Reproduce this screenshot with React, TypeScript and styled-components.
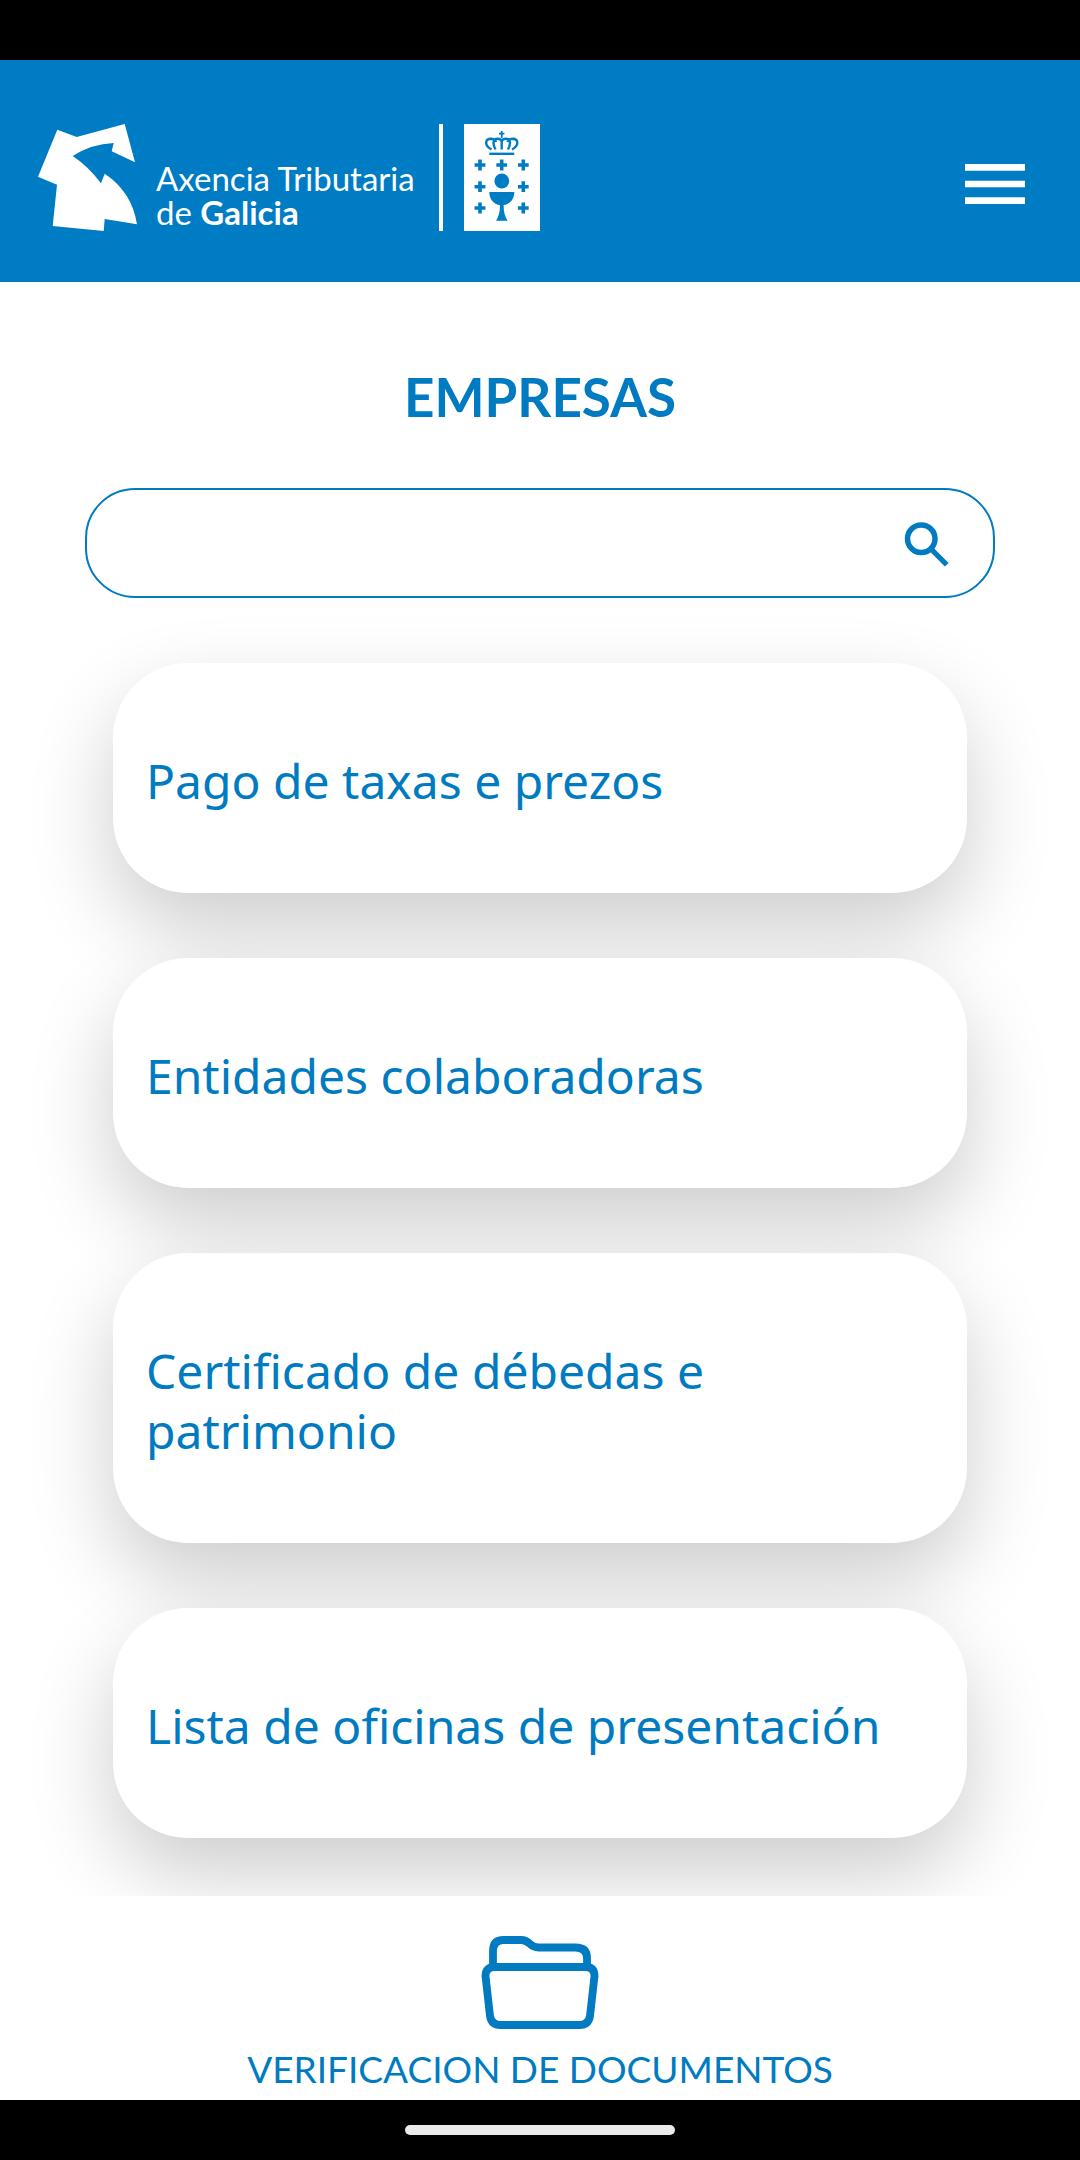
import React from "react";
import styled, { createGlobalStyle } from "styled-components";

const blue = "#007cc5";
const ink = "#007bc1";

const GlobalStyle = createGlobalStyle`
  *, *::before, *::after { box-sizing: border-box; }
  body {
    margin: 0;
    background: #fff;
    font-family: "Noto Sans", "Open Sans", sans-serif;
  }
`;

const Screen = styled.div`
  display: flex;
  flex-direction: column;
  min-height: 100vh;
`;

const StatusBar = styled.div`
  height: 60px;
  background: #000;
`;

const Header = styled.header`
  display: flex;
  align-items: center;
  justify-content: space-between;
  padding: 64px 45px 51px 38px;
  background: ${blue};
  color: #fff;
`;

const Brand = styled.a`
  display: flex;
  align-items: flex-end;
  color: inherit;
  text-decoration: none;
`;

const BrandName = styled.span`
  display: flex;
  flex-direction: column;
  margin-left: 19px;
  padding: 0 24px 2px 0;
  font-family: Lato, sans-serif;
  font-size: 33px;
  line-height: 34px;
  white-space: nowrap;
`;

const Divider = styled.span`
  align-self: stretch;
  width: 4px;
  margin-right: 21px;
  background: #fff;
`;

const IconButton = styled.button`
  display: flex;
  padding: 0;
  border: 0;
  background: none;
  color: inherit;
  cursor: pointer;
`;

const MenuButton = styled(IconButton)`
  padding-top: 12px;
`;

const Main = styled.main`
  flex: 1;
  padding: 78px 85px 58px;
  overflow: hidden;
  color: ${ink};
`;

const Title = styled.h1`
  margin: 0 0 54px;
  font-family: Lato, sans-serif;
  font-size: 53px;
  font-weight: 700;
  line-height: 74px;
  text-align: center;
`;

const SearchForm = styled.form`
  display: flex;
  align-items: center;
  height: 110px;
  padding: 4px 36px 0 40px;
  border: 2px solid ${ink};
  border-radius: 50px;
`;

const SearchInput = styled.input`
  flex: 1;
  min-width: 0;
  border: 0;
  outline: 0;
  background: none;
  color: inherit;
  font: inherit;
  font-size: 48px;
`;

const CardList = styled.ul`
  display: flex;
  flex-direction: column;
  gap: 65px;
  margin: 65px 28px 0;
  padding: 0;
  list-style: none;
`;

const Card = styled.a`
  display: block;
  padding: 88px 33px 82px;
  border-radius: 75px;
  background: #fff;
  box-shadow: 0 36px 84px rgba(0, 0, 0, 0.2);
  color: inherit;
  font-size: 48px;
  line-height: 60px;
  text-decoration: none;
`;

const Footer = styled.footer`
  display: flex;
  justify-content: center;
  background: #fff;
  color: ${ink};
`;

const FooterButton = styled(IconButton)`
  flex-direction: column;
  align-items: center;
  gap: 17px;
  padding: 40px 0 8px;
  font-family: Lato, sans-serif;
  font-size: 37px;
  line-height: 46px;
`;

const NavBar = styled.div`
  display: flex;
  align-items: center;
  justify-content: center;
  height: 60px;
  background: #000;
`;

const NavHandle = styled.span`
  width: 25%;
  height: 10px;
  border-radius: 5px;
  background: #eaeaea;
`;

const BrandMark = () => (
  <svg width="99" height="107" viewBox="0 0 99 107" fill="#fff" aria-hidden="true">
    <path d="M19.3 5.7 38.7 13 86.7 0 97 38.3 73.7 27.3 75.7 19Q53 20 34.7 32 51 43 63 59.3L66.7 49.7Q94 68 99 100.3L66.7 95 65.7 107 14.7 102 19 60.7 0 52.7Z" />
  </svg>
);

const crosses = [
  [16, 41], [37.7, 41], [59.3, 41],
  [16, 62.7], [59.3, 62.7],
  [16, 84], [59.3, 84],
];

const Crest = () => (
  <svg width="76" height="107" viewBox="0 0 76 107" aria-hidden="true">
    <path fill="#fff" d="M0 0h76v107H0z" />
    <g fill="none" stroke={blue}>
      <path strokeWidth="1.8" d="M37.7 7v7M35 9.7h5.4" />
      <path
        strokeWidth="2.4"
        d="M27.500 25.500C20 21.500 21 14.700 27 14.700 30 14.800 31.500 16 32 18M31.500 25.500C28 19 29.500 14.700 33.200 14.700 36 14.700 37.700 16 37.700 18V25.500M48 25.500C55.500 21.500 54.500 14.700 48.500 14.700 45.500 14.800 44 16 43.500 18M44 25.500C47.500 19 46 14.700 42.300 14.700 39.500 14.700 37.700 16 37.700 18"
      />
      <path strokeWidth="2.400" d="M25.300 29.800h25" />
      {crosses.map(([x, y]) => (
        <path key={`${x}-${y}`} strokeWidth="3.600" d={`M${x - 5.4} ${y}h10.800M${x} ${y - 5.4}v10.800`} />
      ))}
    </g>
    <g fill={blue}>
      <circle cx="37.800" cy="57" r="7.400" />
      <path d="M25.300 68h25C50.300 76 45 80.500 39.600 81 39.600 88 41 93 43.700 96.700H32C34.600 93 36 88 36 81 30.500 80.500 25.300 76 25.300 68Z" />
    </g>
  </svg>
);

const MenuIcon = () => (
  <svg width="80" height="80" viewBox="0 0 24 24" fill="currentColor" aria-hidden="true">
    <path d="M3 18h18v-2H3v2zm0-5h18v-2H3v2zm0-7v2h18V6H3z" />
  </svg>
);

const SearchIcon = () => (
  <svg width="60" height="60" viewBox="0 0 24 24" fill="none" stroke="currentColor" aria-hidden="true">
    <circle cx="9.700" cy="9.500" r="5.500" strokeWidth="2.200" />
    <path d="M13.300 13.300 19.900 19.900" strokeWidth="2.100" />
  </svg>
);

const FolderIcon = () => (
  <svg width="118" height="93" viewBox="0 0 117 93" fill="none" stroke="currentColor" strokeWidth="7.800" aria-hidden="true">
    <path d="M4 40Q4 31 13 31H104Q113 31 113 40L108.500 80Q107 89 98 89H19Q10 89 8.500 80Z" />
    <path d="M11.500 31V15Q11.500 4 22 4H40Q44 4 48 7.500 52 11.500 57 11.500H94Q105.500 11.500 105.500 22V31" />
  </svg>
);

const services = [
  "Pago de taxas e prezos",
  "Entidades colaboradoras",
  "Certificado de débedas e patrimonio",
  "Lista de oficinas de presentación",
];

export default function App() {
  return (
    <Screen>
      <GlobalStyle />
      <StatusBar />
      <Header>
        <Brand href="#inicio">
          <BrandMark />
          <BrandName>
            <span>Axencia Tributaria</span>
            <span>
              de <b>Galicia</b>
            </span>
          </BrandName>
          <Divider />
          <Crest />
        </Brand>
        <MenuButton type="button" aria-label="Menú">
          <MenuIcon />
        </MenuButton>
      </Header>
      <Main>
        <Title>EMPRESAS</Title>
        <SearchForm role="search" onSubmit={(event) => event.preventDefault()}>
          <SearchInput type="text" aria-label="Buscar" />
          <IconButton type="submit" aria-label="Buscar">
            <SearchIcon />
          </IconButton>
        </SearchForm>
        <CardList>
          {services.map((service) => (
            <li key={service}>
              <Card href="#servizo">{service}</Card>
            </li>
          ))}
        </CardList>
      </Main>
      <Footer>
        <FooterButton type="button">
          <FolderIcon />
          VERIFICACION DE DOCUMENTOS
        </FooterButton>
      </Footer>
      <NavBar>
        <NavHandle />
      </NavBar>
    </Screen>
  );
}
